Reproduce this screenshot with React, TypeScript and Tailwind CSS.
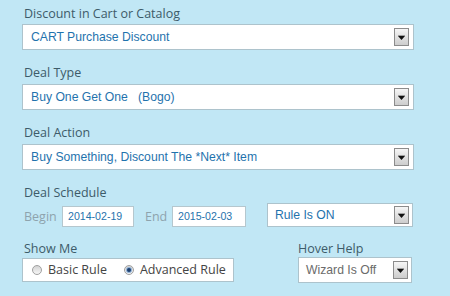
import React from 'react';

const labelFont = { fontFamily: '"Open Sans", "DejaVu Sans", sans-serif' };
const fieldFont = { fontFamily: '"Liberation Sans", Arial, sans-serif' };

function DropButton({ tall = true }: { tall?: boolean }) {
  return (
    <span
      className={`flex w-[15px] shrink-0 items-center justify-center border border-[#8c8c8c] bg-gradient-to-b from-[#f6f6f6] to-[#cdcdcd] ${tall ? 'h-[18px]' : 'h-[17px]'}`}
    >
      <svg width="7" height="5" viewBox="0 0 7 5">
        <rect x="0" y="0" width="7" height="1" fill="#a0a0a0" />
        <path d="M0 1 H7 L3.5 5 Z" fill="#111" />
      </svg>
    </span>
  );
}

function Label({ children, className = '' }: { children: React.ReactNode; className?: string }) {
  return (
    <div style={labelFont} className={`h-[18px] text-[12.5px] leading-[18px] text-[#3d5b69] ${className}`}>
      {children}
    </div>
  );
}

function Select({
  value,
  className = '',
  muted = false,
}: {
  value: string;
  className?: string;
  muted?: boolean;
}) {
  return (
    <div
      style={fieldFont}
      className={`flex shrink-0 items-center justify-between border border-[#adc3cc] bg-white text-[12.2px] ${muted ? 'text-[#6b6b6b]' : 'text-[#1f73ad]'} ${className}`}
    >
      <span className="whitespace-pre">{value}</span>
      <DropButton />
    </div>
  );
}

function DateBox({ value, className = '' }: { value: string; className?: string }) {
  return (
    <div
      style={fieldFont}
      className={`flex h-[21px] shrink-0 items-center border border-[#b5c7ce] bg-white pl-[5px] text-[10.6px] text-[#1f73ad] ${className}`}
    >
      {value}
    </div>
  );
}

function Radio({ checked, label }: { checked?: boolean; label: string }) {
  return (
    <label className="flex items-center gap-[6px]">
      <span className="flex h-[10px] w-[10px] items-center justify-center rounded-full border border-[#a0a0a0] bg-gradient-to-b from-[#d4d4d4] to-[#f6f6f6]">
        {checked && <span className="h-[4px] w-[4px] rounded-full bg-[#1d3f6e] ring-1 ring-[#8fb0d6]" />}
      </span>
      <span style={labelFont} className="text-[12.5px] text-[#444]">
        {label}
      </span>
    </label>
  );
}

export default function App() {
  return (
    <div className="h-[296px] w-[450px] overflow-hidden bg-[#c1e7f5] pl-[22px] pt-[5px]">
      <div className="flex w-[392px] flex-col">
        <Label className="ml-[2px]">Discount in Cart or Catalog</Label>
        <Select value="CART Purchase Discount" className="mt-[1px] h-[26px] pl-[8px] pr-[4px]" />

        <Label className="ml-[2px] mt-[14px]">Deal Type</Label>
        <Select value="Buy One Get One   (Bogo)" className="mt-[2px] h-[26px] pl-[8px] pr-[4px]" />

        <Label className="ml-[2px] mt-[14px]">Deal Action</Label>
        <Select value="Buy Something, Discount The *Next* Item" className="mt-[2px] h-[26px] pl-[8px] pr-[4px]" />

        <Label className="ml-[2px] mt-[14px]">Deal Schedule</Label>
        <div className="mt-[1px] flex h-[24px] items-end">
          <span style={labelFont} className="ml-[2px] w-[38px] shrink-0 text-[12.5px] leading-[21px] text-[#8ea3ad]">
            Begin
          </span>
          <DateBox value="2014-02-19" className="w-[72px]" />
          <span style={labelFont} className="ml-[11px] w-[27px] shrink-0 text-[12.5px] leading-[21px] text-[#8ea3ad]">
            End
          </span>
          <DateBox value="2015-02-03" className="w-[74px]" />
          <Select value="Rule Is ON" className="ml-[21px] h-[24px] w-[146px] pl-[7px] pr-[3px]" />
        </div>

        <div className="mt-[13px] flex">
          <div className="flex flex-col">
            <Label className="ml-[2px]">Show Me</Label>
            <div className="flex h-[24px] w-[212px] items-center border border-[#adc3cc] bg-white pl-[9px]">
              <Radio label="Basic Rule" />
              <span className="w-[17px]" />
              <Radio checked label="Advanced Rule" />
            </div>
          </div>
          <div className="ml-[64px] flex flex-col">
            <Label>Hover Help</Label>
            <Select value="Wizard Is Off" muted className="mt-[-1px] h-[26px] w-[114px] pl-[7px] pr-[3px]" />
          </div>
        </div>
      </div>
    </div>
  );
}
